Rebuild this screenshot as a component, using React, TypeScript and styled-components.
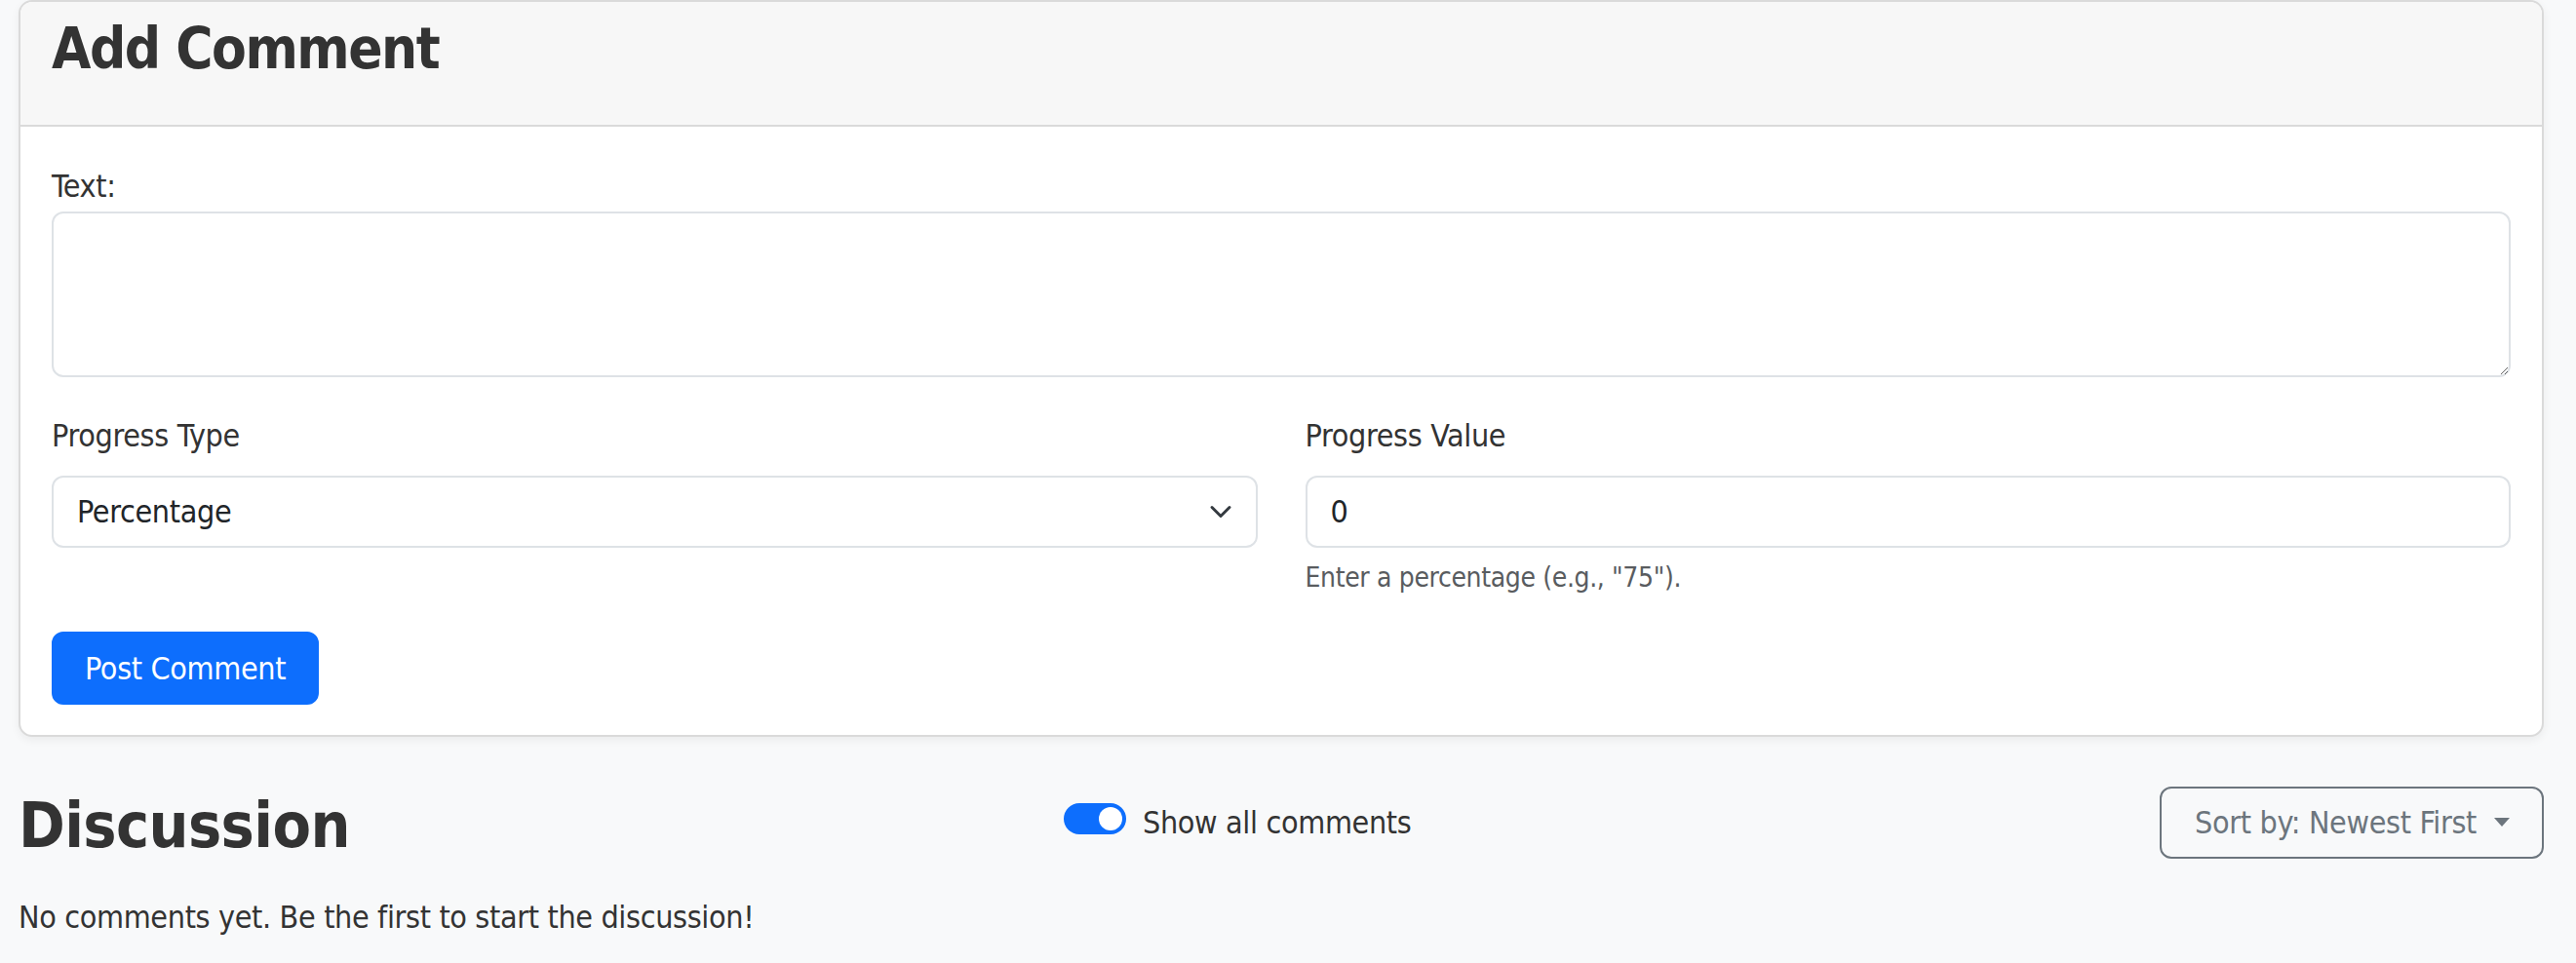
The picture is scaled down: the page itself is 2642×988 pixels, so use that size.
import React from "react";
import styled, { createGlobalStyle } from "styled-components";

const GlobalStyle = createGlobalStyle`
  html, body {
    margin: 0;
    padding: 0;
    background: #f8f9fa;
  }
  body {
    font-family: "DejaVu Sans Condensed", "DejaVu Sans", sans-serif;
    font-stretch: condensed;
    font-size: 32px;
    line-height: 48px;
    letter-spacing: -0.35px;
    color: #333333;
  }
  * { box-sizing: border-box; }
`;

const Page = styled.div`
  width: 2642px;
  padding: 0 33px 0 19px;
`;

const Card = styled.section`
  background: #ffffff;
  border: 2px solid #dadada;
  border-radius: 14px;
  overflow: hidden;
  box-shadow: 0 3px 10px rgba(0, 0, 0, 0.06);
`;

const CardHeader = styled.header`
  background: #f7f7f7;
  border-bottom: 2px solid #dadada;
  padding: 14px 32px 42px;
`;

const CardTitle = styled.h3`
  margin: 0;
  font-size: 58px;
  line-height: 1.2;
  font-weight: 700;
  letter-spacing: -1.5px;
  color: #333333;
`;

const CardBody = styled.div`
  padding: 37px 32px 31px;
`;

const Label = styled.label<{ $gap: number }>`
  display: block;
  margin-bottom: ${(p) => p.$gap}px;
  color: #333333;
`;

const TextArea = styled.textarea`
  display: block;
  width: 100%;
  height: 170px;
  margin: 0 0 36px;
  padding: 12px 24px;
  border: 2px solid #dee2e6;
  border-radius: 12px;
  background: #ffffff;
  font: inherit;
  letter-spacing: inherit;
  color: #212529;
  resize: vertical;
  outline: none;
`;

const FieldRow = styled.div`
  display: grid;
  grid-template-columns: 1fr 1fr;
  column-gap: 49px;
  margin-bottom: 34px;
`;

const Field = styled.div`
  display: flex;
  flex-direction: column;
`;

const SelectWrap = styled.div`
  position: relative;
`;

const Select = styled.select`
  display: block;
  width: 100%;
  appearance: none;
  padding: 11px 72px 11px 24px;
  border: 2px solid #dee2e6;
  border-radius: 12px;
  background: #ffffff;
  font: inherit;
  letter-spacing: inherit;
  line-height: 48px;
  color: #212529;
  outline: none;
`;

const Chevron = styled.svg`
  position: absolute;
  right: 26px;
  top: 50%;
  width: 24px;
  height: 24px;
  margin-top: -12px;
  pointer-events: none;
`;

const Input = styled.input`
  display: block;
  width: 100%;
  padding: 11px 24px;
  border: 2px solid #dee2e6;
  border-radius: 12px;
  background: #ffffff;
  font: inherit;
  letter-spacing: inherit;
  line-height: 48px;
  color: #212529;
  outline: none;
`;

const HelpText = styled.div`
  margin-top: 10px;
  font-size: 28px;
  line-height: 42px;
  color: #595c5f;
`;

const PrimaryButton = styled.button`
  display: inline-block;
  padding: 12px 32px 11px;
  border: 2px solid #0d6efd;
  border-radius: 12px;
  background: #0d6efd;
  color: #ffffff;
  font: inherit;
  letter-spacing: inherit;
  line-height: 48px;
  cursor: pointer;
`;

const DiscussionBar = styled.div`
  display: grid;
  grid-template-columns: 1072px auto 1fr;
  align-items: center;
  margin-top: 50px;
`;

const DiscussionTitle = styled.h2`
  margin: 6px 0 0;
  font-size: 64px;
  line-height: 70px;
  font-weight: 700;
  letter-spacing: -0.6px;
  color: #333333;
`;

const SwitchGroup = styled.label`
  display: flex;
  align-items: flex-start;
  gap: 17px;
  color: #333333;
`;

const SwitchTrack = styled.span<{ $on: boolean }>`
  display: flex;
  align-items: center;
  justify-content: ${(p) => (p.$on ? "flex-end" : "flex-start")};
  width: 64px;
  height: 32px;
  margin-top: 4px;
  padding: 0 4px;
  border-radius: 16px;
  background: ${(p) => (p.$on ? "#0d6efd" : "#ffffff")};
`;

const SwitchKnob = styled.span`
  width: 24px;
  height: 24px;
  border-radius: 50%;
  background: #ffffff;
`;

const SortButton = styled.button`
  justify-self: end;
  display: inline-flex;
  align-items: center;
  padding: 11px 33px 11px 34px;
  border: 2px solid #6c757d;
  border-radius: 12px;
  background: transparent;
  color: #6c757d;
  font: inherit;
  letter-spacing: inherit;
  line-height: 48px;
  cursor: pointer;
`;

const Caret = styled.span`
  display: inline-block;
  margin-left: 18px;
  width: 0;
  height: 0;
  border-top: 9px solid #6c757d;
  border-left: 8.5px solid transparent;
  border-right: 8.5px solid transparent;
`;

const EmptyNote = styled.p`
  margin: 35px 0 0;
  color: #333333;
`;

export default function App() {
  return (
    <>
      <GlobalStyle />
      <Page>
        <Card>
          <CardHeader>
            <CardTitle>Add Comment</CardTitle>
          </CardHeader>
          <CardBody>
            <Label $gap={2} htmlFor="comment-text">
              Text:
            </Label>
            <TextArea id="comment-text" />
            <FieldRow>
              <Field>
                <Label $gap={17} htmlFor="progress-type">
                  Progress Type
                </Label>
                <SelectWrap>
                  <Select id="progress-type" defaultValue="percentage">
                    <option value="percentage">Percentage</option>
                    <option value="steps">Steps</option>
                  </Select>
                  <Chevron viewBox="0 0 16 16" fill="none">
                    <path
                      d="m2 5 6 6 6-6"
                      stroke="#343a40"
                      strokeWidth="2"
                      strokeLinecap="round"
                      strokeLinejoin="round"
                    />
                  </Chevron>
                </SelectWrap>
              </Field>
              <Field>
                <Label $gap={17} htmlFor="progress-value">
                  Progress Value
                </Label>
                <Input id="progress-value" type="text" defaultValue="0" />
                <HelpText>Enter a percentage (e.g., "75").</HelpText>
              </Field>
            </FieldRow>
            <PrimaryButton type="button">Post Comment</PrimaryButton>
          </CardBody>
        </Card>

        <DiscussionBar>
          <DiscussionTitle>Discussion</DiscussionTitle>
          <SwitchGroup>
            <SwitchTrack $on={true}>
              <SwitchKnob />
            </SwitchTrack>
            Show all comments
          </SwitchGroup>
          <SortButton type="button">
            Sort by: Newest First
            <Caret />
          </SortButton>
        </DiscussionBar>

        <EmptyNote>No comments yet. Be the first to start the discussion!</EmptyNote>
      </Page>
    </>
  );
}
